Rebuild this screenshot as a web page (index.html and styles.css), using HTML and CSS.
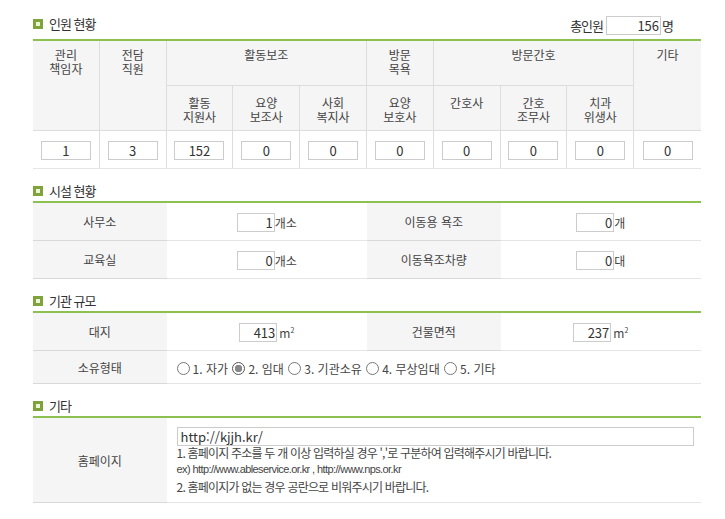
FILE: index.html
```html
<!DOCTYPE html>
<html lang="ko">

<head>
    <meta charset="UTF-8">
    <meta name="viewport" content="width=device-width, initial-scale=1.0">
    <link rel="stylesheet" href="styles.css">
</head>

<body>
    <div class="wrap">
        <!-- 인원 현황 -->
        <div class="sec">
            <div class="secHead">
                <h2 class="secTitle"><span class="bullet"></span>인원 현황</h2>
                <div class="total">총인원<input class="box totalBox" type="text" value="156">명</div>
            </div>
            <table class="grid staff">
                <colgroup>
                    <col><col><col><col><col><col><col><col><col><col>
                </colgroup>
                <tr class="r1">
                    <th rowspan="2">관리<br>책임자</th>
                    <th rowspan="2">전담<br>직원</th>
                    <th colspan="3">활동보조</th>
                    <th>방문<br>목욕</th>
                    <th colspan="3">방문간호</th>
                    <th rowspan="2" class="last">기타</th>
                </tr>
                <tr class="r2">
                    <th>활동<br>지원사</th>
                    <th>요양<br>보조사</th>
                    <th>사회<br>복지사</th>
                    <th>요양<br>보호사</th>
                    <th>간호사</th>
                    <th>간호<br>조무사</th>
                    <th>치과<br>위생사</th>
                </tr>
                <tr class="r3">
                    <td><input class="box cnt" type="text" value="1"></td>
                    <td><input class="box cnt" type="text" value="3"></td>
                    <td><input class="box cnt" type="text" value="152"></td>
                    <td><input class="box cnt" type="text" value="0"></td>
                    <td><input class="box cnt" type="text" value="0"></td>
                    <td><input class="box cnt" type="text" value="0"></td>
                    <td><input class="box cnt" type="text" value="0"></td>
                    <td><input class="box cnt" type="text" value="0"></td>
                    <td><input class="box cnt" type="text" value="0"></td>
                    <td class="last"><input class="box cnt" type="text" value="0"></td>
                </tr>
            </table>
        </div>

        <!-- 시설 현황 -->
        <div class="sec">
            <div class="secHead">
                <h2 class="secTitle"><span class="bullet"></span>시설 현황</h2>
            </div>
            <table class="grid info">
                <colgroup>
                    <col class="cLab"><col class="cVal"><col class="cLab"><col class="cVal">
                </colgroup>
                <tr>
                    <th>사무소</th>
                    <td><span class="field"><input class="box num" type="text" value="1">개소</span></td>
                    <th>이동용 욕조</th>
                    <td><span class="field"><input class="box num" type="text" value="0">개</span></td>
                </tr>
                <tr>
                    <th>교육실</th>
                    <td><span class="field"><input class="box num" type="text" value="0">개소</span></td>
                    <th>이동욕조차량</th>
                    <td><span class="field"><input class="box num" type="text" value="0">대</span></td>
                </tr>
            </table>
        </div>

        <!-- 기관 규모 -->
        <div class="sec">
            <div class="secHead">
                <h2 class="secTitle"><span class="bullet"></span>기관 규모</h2>
            </div>
            <table class="grid info">
                <colgroup>
                    <col class="cLab"><col class="cVal"><col class="cLab"><col class="cVal">
                </colgroup>
                <tr>
                    <th>대지</th>
                    <td><span class="field"><input class="box num" type="text" value="413"><span class="sq">m<sup>2</sup></span></span></td>
                    <th>건물면적</th>
                    <td><span class="field"><input class="box num" type="text" value="237"><span class="sq">m<sup>2</sup></span></span></td>
                </tr>
                <tr class="short">
                    <th>소유형태</th>
                    <td colspan="3" class="radios">
                        <label class="radio"><input type="radio" name="own">1. 자가</label>
                        <label class="radio"><input type="radio" name="own" checked>2. 임대</label>
                        <label class="radio"><input type="radio" name="own">3. 기관소유</label>
                        <label class="radio"><input type="radio" name="own">4. 무상임대</label>
                        <label class="radio"><input type="radio" name="own">5. 기타</label>
                    </td>
                </tr>
            </table>
        </div>

        <!-- 기타 -->
        <div class="sec">
            <div class="secHead">
                <h2 class="secTitle"><span class="bullet"></span>기타</h2>
            </div>
            <table class="grid info">
                <colgroup>
                    <col class="cLab"><col>
                </colgroup>
                <tr class="tall">
                    <th>홈페이지</th>
                    <td class="home">
                        <input class="box url" type="text" value="http://kjjh.kr/">
                        <p class="hint first">1. 홈페이지 주소를 두 개 이상 입력하실 경우 ','로 구분하여 입력해주시기 바랍니다.</p>
                        <p class="hint ex">ex) http://www.ableservice.or.kr , http://www.nps.or.kr</p>
                        <p class="hint">2. 홈페이지가 없는 경우 공란으로 비워주시기 바랍니다.</p>
                    </td>
                </tr>
            </table>
        </div>
    </div>
</body>

</html>
```

FILE: styles.css
```css
body {
    margin: 0;
    font-family: "Noto Sans CJK KR", "Noto Sans", sans-serif;
    color: #444444;
    background: #ffffff;
}

.wrap {
    width: 668px;
    margin-left: 33px;
    padding-top: 16px;
}

.sec + .sec {
    margin-top: 14px;
}

.secHead {
    display: flex;
    justify-content: space-between;
    align-items: flex-start;
    border-bottom: 2px solid #8cc152;
}

.secTitle {
    display: flex;
    align-items: center;
    gap: 6px;
    margin: 0 0 3px;
    font-size: 13px;
    font-weight: normal;
    line-height: 15px;
    letter-spacing: -1px;
    color: #333333;
}

.bullet {
    width: 10px;
    height: 10px;
    box-sizing: border-box;
    border: 3px solid #7da33a;
    background: #eef4d6;
}

.total {
    display: flex;
    align-items: center;
    margin: 0 28px 4px 0;
    font-size: 13px;
    letter-spacing: -1px;
    color: #333333;
}

.box {
    height: 19px;
    box-sizing: border-box;
    border: 1px solid #cccccc;
    padding: 0;
    margin: 0;
    font-family: "Noto Sans CJK KR", sans-serif;
    font-size: 13px;
    color: #333333;
    background: #ffffff;
    vertical-align: middle;
    outline: none;
}

.totalBox {
    width: 55px;
    margin: 0 1px 0 3px;
    padding-right: 1px;
    text-align: right;
    letter-spacing: 0;
}

/* tables */
.grid {
    width: 100%;
    border-collapse: separate;
    border-spacing: 0;
    table-layout: fixed;
}

.grid th,
.grid td {
    box-sizing: border-box;
    padding: 0;
    border-bottom: 1px solid #dddddd;
    font-size: 12px;
    font-weight: normal;
    color: #444444;
}

.staff th {
    background: #f5f5f5;
    border-right: 1px solid #dddddd;
    vertical-align: top;
    line-height: 14px;
    padding-top: 7px;
}

.staff .r2 th {
    padding-top: 10px;
}

.staff .r1 {
    height: 45px;
}

.staff .r2 {
    height: 45px;
}

.staff .r3 {
    height: 38px;
}

.staff td {
    text-align: center;
    vertical-align: middle;
    border-right: 1px solid #dddddd;
    border-bottom-color: #e5e5e5;
}

.staff .last {
    border-right: none;
}

.cnt {
    width: 50px;
    text-align: center;
}

.cLab {
    width: 20%;
}

.cVal {
    width: 30%;
}

.info tr {
    height: 38px;
}

.info tr.short {
    height: 33px;
}

.info tr.tall {
    height: 85px;
}

.info th {
    background: #f5f5f5;
    text-align: center;
    vertical-align: middle;
    border-bottom-color: #d9d9d9;
}

.info td {
    text-align: center;
    vertical-align: middle;
    border-bottom-color: #e5e5e5;
    white-space: nowrap;
}

.field {
    display: inline-flex;
    align-items: center;
    vertical-align: middle;
}

.num {
    width: 38px;
    padding-right: 1px;
    text-align: right;
}

.sq {
    margin-left: 2px;
    font-size: 12px;
}

.sq sup {
    font-size: 7px;
    vertical-align: 5px;
    line-height: 0;
}

.info td.radios {
    text-align: left;
    padding-left: 10px;
}

.radio {
    display: inline-flex;
    align-items: center;
    margin-right: 1px;
    font-size: 12px;
    color: #444444;
    vertical-align: middle;
}

.radio input {
    appearance: none;
    width: 13px;
    height: 13px;
    margin: 0 3px 0 0;
    border: 1px solid #777777;
    border-radius: 50%;
    background: #ffffff;
}

.radio input:checked {
    border-color: #555555;
    background: radial-gradient(circle, #888888 0 3.5px, #ffffff 4px);
}

.info td.home {
    text-align: left;
    vertical-align: top;
    padding: 9px 8px 5px 10px;
}

.url {
    display: block;
    width: 517px;
    padding-left: 3px;
    text-align: left;
}

.hint {
    margin: 0;
    font-size: 12px;
    line-height: 17px;
    letter-spacing: -0.8px;
    color: #444444;
}

.hint.first {
    margin-top: -2px;
}

.hint.ex {
    font-family: "Liberation Sans", sans-serif;
    font-size: 11px;
    letter-spacing: -0.6px;
}
```
